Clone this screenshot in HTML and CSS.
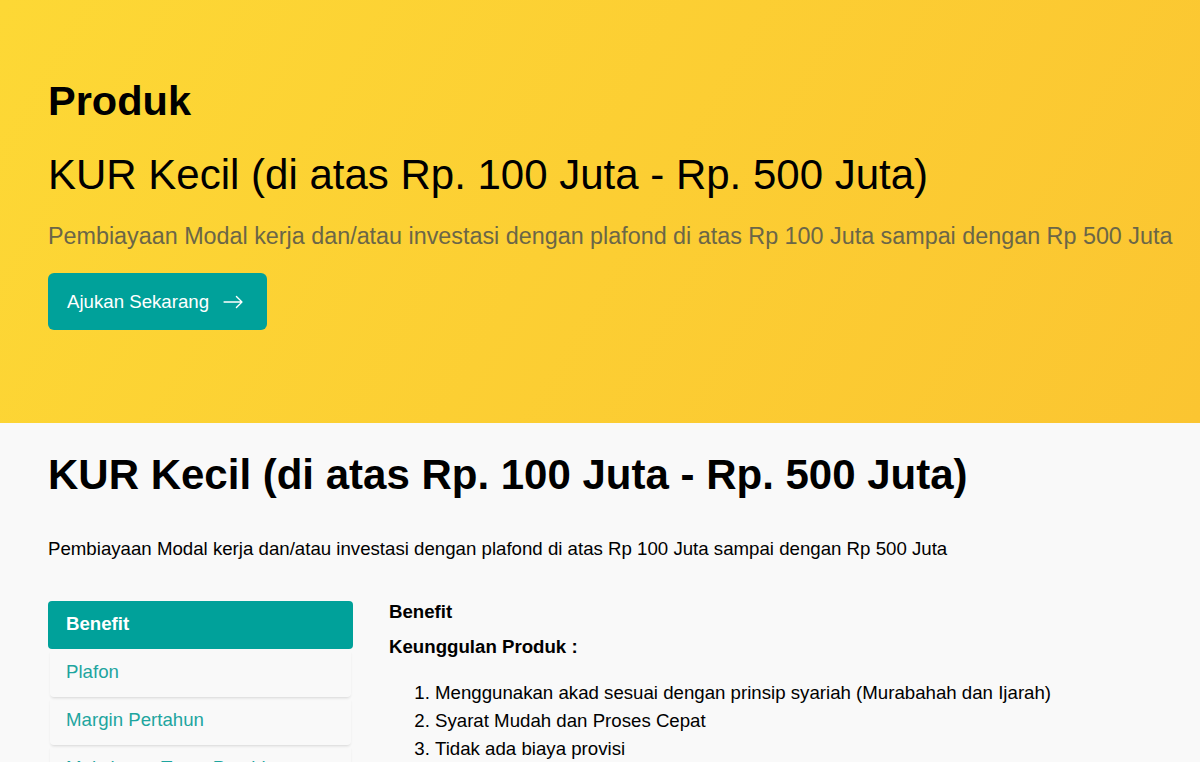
FILE: index.html
```html
<!DOCTYPE html>
<html lang="id">
<head>
    <meta charset="UTF-8">
    <meta name="viewport" content="width=device-width, initial-scale=1.0">
    <title>KUR Kecil</title>
    <link rel="stylesheet" href="styles.css">
</head>
<body>
    <section class="hero">
        <h1 class="hero_label">Produk</h1>
        <h2 class="hero_title">KUR Kecil (di atas Rp. 100 Juta - Rp. 500 Juta)</h2>
        <p class="hero_desc">Pembiayaan Modal kerja dan/atau investasi dengan plafond di atas Rp 100 Juta sampai dengan Rp 500 Juta</p>
        <a href="#" class="btn_apply">
            Ajukan Sekarang
            <svg width="22" height="22" viewBox="0 0 16 16" fill="currentColor">
                <path fill-rule="evenodd" d="M1 8a.5.5 0 0 1 .5-.5h11.793l-3.147-3.146a.5.5 0 0 1 .708-.708l4 4a.5.5 0 0 1 0 .708l-4 4a.5.5 0 0 1-.708-.708L13.293 8.5H1.5A.5.5 0 0 1 1 8z"/>
            </svg>
        </a>
    </section>

    <section class="detail">
        <h2 class="detail_title">KUR Kecil (di atas Rp. 100 Juta - Rp. 500 Juta)</h2>
        <p class="detail_desc">Pembiayaan Modal kerja dan/atau investasi dengan plafond di atas Rp 100 Juta sampai dengan Rp 500 Juta</p>

        <div class="detail_body">
            <ul class="tab_menu">
                <li class="on">Benefit</li>
                <li>Plafon</li>
                <li>Margin Pertahun</li>
                <li>Maksimum Tenor Pembiayaan</li>
            </ul>
            <div class="tab_content">
                <h4>Benefit</h4>
                <h4>Keunggulan Produk :</h4>
                <ol>
                    <li>Menggunakan akad sesuai dengan prinsip syariah (Murabahah dan Ijarah)</li>
                    <li>Syarat Mudah dan Proses Cepat</li>
                    <li>Tidak ada biaya provisi</li>
                </ol>
            </div>
        </div>
    </section>
</body>
</html>
```

FILE: styles.css
```css
* {margin: 0; padding: 0; box-sizing: border-box;}
body {
    font-family: "Liberation Sans", Arial, sans-serif;
    font-size: 14pt;
    background: #f9f9f9;
    color: #000;
}
.hero {
    height: 423px;
    padding: 78px 20px 0 48px;
    background: linear-gradient(120deg, #fdd835 0%, #fbc531 100%);
}
.hero_label {
    font-size: 41.5px;
    font-weight: bold;
    line-height: 46px;
}
.hero_title {
    margin-top: 26px;
    font-size: 42px;
    font-weight: normal;
    line-height: 50px;
}
.hero_desc {
    margin-top: 20px;
    font-size: 23.33px;
    line-height: 32px;
    color: #6b6647;
}
.btn_apply {
    display: inline-flex;
    align-items: center;
    gap: 13px;
    margin-top: 21px;
    height: 57px;
    padding: 0 23px 0 19px;
    border-radius: 6px;
    background: #00a19a;
    color: #fff;
    text-decoration: none;
}
.detail {
    padding: 27px 48px 0;
}
.detail_title {
    font-size: 42px;
    font-weight: bold;
    line-height: 50px;
}
.detail_desc {
    margin-top: 36px;
    line-height: 26px;
}
.detail_body {
    display: grid;
    grid-template-columns: 305px 1fr;
    gap: 36px;
    margin-top: 39px;
}
.tab_menu {
    list-style: none;
}
.tab_menu li {
    height: 48px;
    line-height: 46px;
    padding-left: 16px;
    margin: 0 2px;
    color: #1ea59f;
    border-radius: 4px;
    box-shadow: 0 2px 3px -1px rgba(0, 0, 0, 0.14);
}
.tab_menu li.on {
    margin: 0;
    padding-left: 18px;
    background: #00a19a;
    color: #fff;
    font-weight: bold;
    box-shadow: none;
}
.tab_content h4 {
    line-height: 22px;
    margin-bottom: 13px;
}
.tab_content ol {
    margin-top: 21px;
    padding-left: 46px;
    line-height: 28px;
}
```
